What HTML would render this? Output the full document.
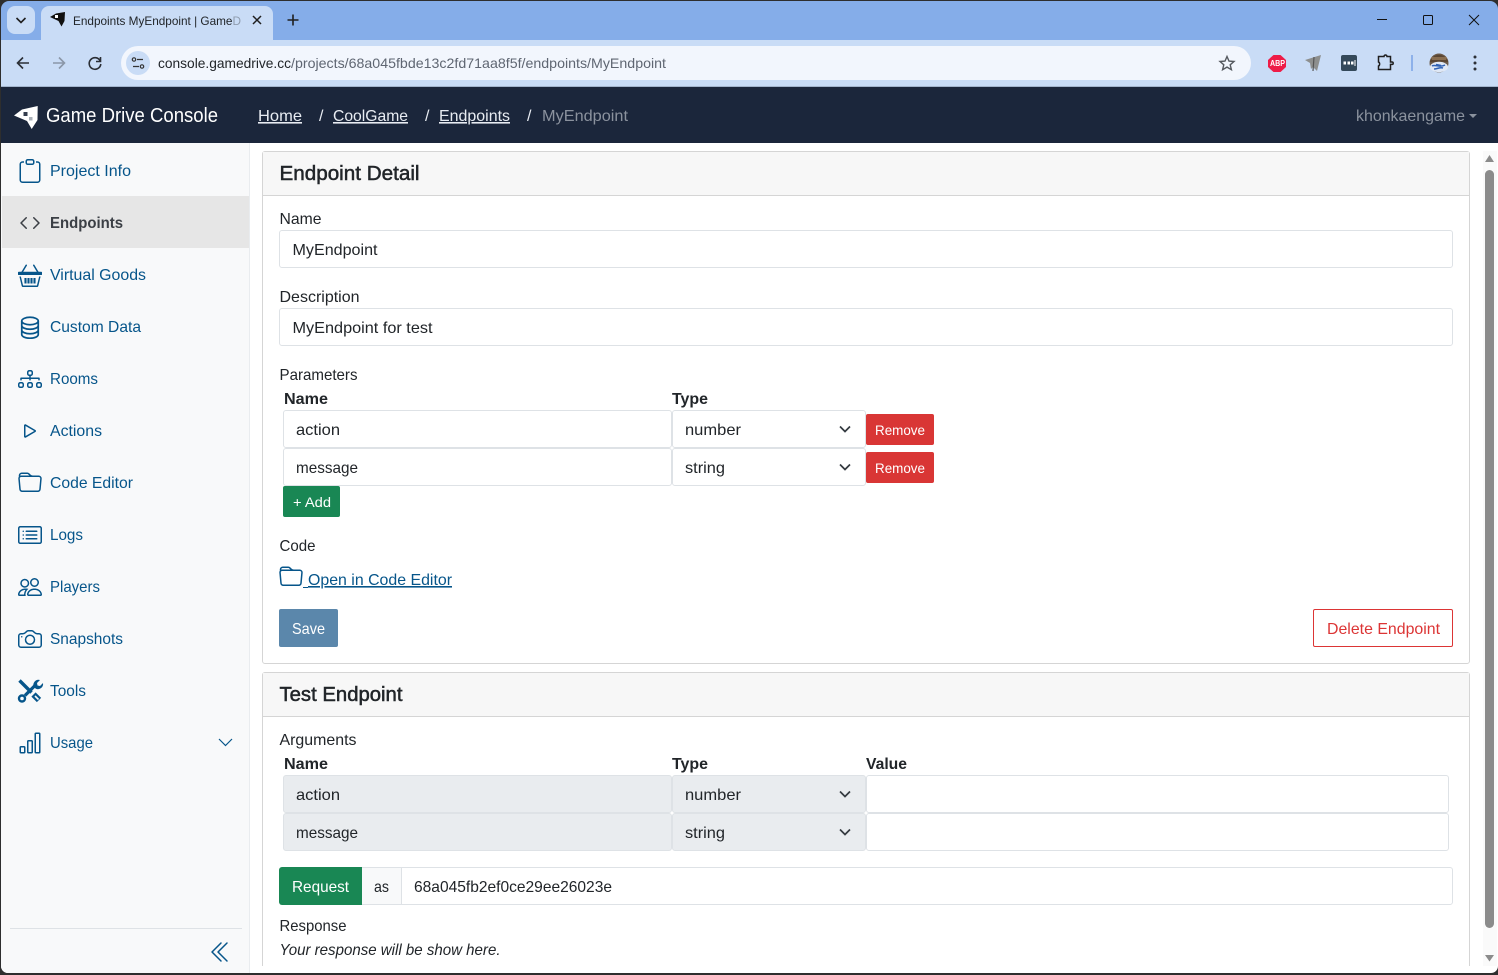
<!DOCTYPE html>
<html lang="en">
<head>
<meta charset="utf-8">
<title>Endpoints MyEndpoint | GameDrive</title>
<style>
html,body{margin:0;padding:0;width:1498px;height:975px;overflow:hidden;background:#2e2e2e}
.b{position:absolute;box-sizing:border-box}
svg.o{position:absolute;left:0;top:0}
text{font-family:"Liberation Sans",sans-serif;font-size:16px;fill:#212529;white-space:pre}
.s{fill:#06558a}
.m{stroke:#212529;stroke-width:.5px}
.n{font-weight:700;font-size:16px}
.w{fill:#fff;font-size:14px}
.i{fill:#06558a}
</style>
</head>
<body>
<!-- browser chrome -->
<div class="b" style="left:1px;top:1px;width:1497px;height:39px;background:#85ade9;border-radius:8px 8px 0 0"></div>
<div class="b" style="left:1px;top:40px;width:1497px;height:47px;background:#c9dcf6;border-bottom:1px solid #a3b5cd"></div>
<div class="b" style="left:7px;top:6px;width:28px;height:28px;background:#c9dcf6;border-radius:8px"></div>
<div class="b" style="left:41px;top:6px;width:232px;height:35px;background:#c9dcf6;border-radius:8px 8px 0 0"></div>
<div class="b" style="left:121px;top:46px;width:1130px;height:34px;background:#f2f6fd;border-radius:17px"></div>
<div class="b" style="left:126px;top:51px;width:24px;height:24px;background:#c9dcf6;border-radius:12px"></div>
<!-- app -->
<div class="b" style="left:1px;top:87px;width:1497px;height:56px;background:#1b263b"></div>
<div class="b" style="left:1px;top:143px;width:1497px;height:830px;background:#fff;border-radius:0 0 7px 7px"></div>
<div class="b" style="left:1px;top:143px;width:249px;height:830px;background:#f8f9fa;border-right:1px solid #e9ecef;border-radius:0 0 0 7px"></div>
<div class="b" style="left:2px;top:196px;width:247px;height:52px;background:#e6e6e6"></div>
<div class="b" style="left:10px;top:928px;width:232px;height:1px;background:#dee2e6"></div>
<!-- scrollbar -->
<div class="b" style="left:1483px;top:151px;width:14px;height:815px;background:#fafafa"></div>
<div class="b" style="left:1485px;top:170px;width:9px;height:758px;background:#8b8b8b;border-radius:5px"></div>
<!-- card 1 -->
<div class="b" style="left:262px;top:151px;width:1208px;height:513px;border:1px solid #d5d5d5;border-radius:3px;background:#fff"></div>
<div class="b" style="left:263px;top:152px;width:1206px;height:44px;background:#f7f7f7;border-bottom:1px solid #d5d5d5"></div>
<div class="b" style="left:279px;top:230px;width:1174px;height:38px;border:1px solid #dee2e6;border-radius:3px"></div>
<div class="b" style="left:279px;top:308px;width:1174px;height:38px;border:1px solid #dee2e6;border-radius:3px"></div>
<div class="b" style="left:283px;top:410px;width:389px;height:38px;border:1px solid #dee2e6;border-radius:3px"></div>
<div class="b" style="left:672px;top:410px;width:194px;height:38px;border:1px solid #dee2e6;border-radius:3px"></div>
<div class="b" style="left:283px;top:448px;width:389px;height:38px;border:1px solid #dee2e6;border-radius:3px"></div>
<div class="b" style="left:672px;top:448px;width:194px;height:38px;border:1px solid #dee2e6;border-radius:3px"></div>
<div class="b" style="left:866px;top:414px;width:68px;height:31px;background:#d93635;border-radius:2px"></div>
<div class="b" style="left:866px;top:452px;width:68px;height:31px;background:#d93635;border-radius:2px"></div>
<div class="b" style="left:283px;top:486px;width:57px;height:31px;background:#198754;border-radius:2px"></div>
<div class="b" style="left:279px;top:609px;width:59px;height:38px;background:#5b87ab;border-radius:2px"></div>
<div class="b" style="left:1313px;top:609px;width:140px;height:38px;border:1px solid #dc3535;border-radius:2px"></div>
<!-- card 2 -->
<div class="b" style="left:262px;top:672px;width:1208px;height:294px;border:1px solid #d5d5d5;border-bottom:0;border-radius:3px 3px 0 0;background:#fff"></div>
<div class="b" style="left:263px;top:673px;width:1206px;height:44px;background:#f7f7f7;border-bottom:1px solid #d5d5d5"></div>
<div class="b" style="left:283px;top:775px;width:389px;height:38px;border:1px solid #dee2e6;background:#e9ecef;border-radius:3px"></div>
<div class="b" style="left:672px;top:775px;width:194px;height:38px;border:1px solid #dee2e6;background:#e9ecef;border-radius:3px"></div>
<div class="b" style="left:866px;top:775px;width:583px;height:38px;border:1px solid #dee2e6;border-radius:3px"></div>
<div class="b" style="left:283px;top:813px;width:389px;height:38px;border:1px solid #dee2e6;background:#e9ecef;border-radius:3px"></div>
<div class="b" style="left:672px;top:813px;width:194px;height:38px;border:1px solid #dee2e6;background:#e9ecef;border-radius:3px"></div>
<div class="b" style="left:866px;top:813px;width:583px;height:38px;border:1px solid #dee2e6;border-radius:3px"></div>
<div class="b" style="left:279px;top:867px;width:83px;height:38px;background:#198754;border-radius:3px 0 0 3px"></div>
<div class="b" style="left:362px;top:867px;width:40px;height:38px;background:#f8f9fa;border:1px solid #dee2e6;border-left:0"></div>
<div class="b" style="left:401px;top:867px;width:1052px;height:38px;border:1px solid #dee2e6;border-radius:0 3px 3px 0"></div>

<svg class="o" width="1498" height="975" viewBox="0 0 1498 975" xmlns="http://www.w3.org/2000/svg">
<!-- chrome icons -->
<path d="M16.5 18l4.5 4.5 4.5-4.5" fill="none" stroke="#1f1f1f" stroke-width="1.6"/>
<path d="M50 17 56 13.500l9-1.500-.5 9-3 5.500-3-5.500z" fill="#111"/><rect x="55" y="15" width="3" height="3" fill="#fff"/>
<text x="73" y="25" style="font-size:12px" fill="#1f1f1f" textLength="168" lengthAdjust="spacingAndGlyphs">Endpoints MyEndpoint | GameD</text>
<rect x="232" y="10" width="10" height="20" fill="#c9dcf6" opacity=".65"/>
<path d="M253 16l8 8M261 16l-8 8" stroke="#1f1f1f" stroke-width="1.5"/>
<path d="M293 14.500v11M287.500 20h11" stroke="#1f1f1f" stroke-width="1.6"/>
<path d="M1377 19.500h10" stroke="#111" stroke-width="1"/>
<rect x="1423.500" y="15.500" width="9" height="9" rx="1" fill="none" stroke="#111"/>
<path d="M1469 15l10 10M1479 15l-10 10" stroke="#111" stroke-width="1"/>
<path d="M29 63H18M23 57.500 17.500 63l5.500 5.500" fill="none" stroke="#2b2f36" stroke-width="1.6"/>
<path d="M53 63h11M59 57.500l5.500 5.500-5.500 5.500" fill="none" stroke="#8b97a8" stroke-width="1.6"/>
<path d="M100 60.500A5.800 5.800 0 1 0 100.800 64M100.500 57v4.500H96" fill="none" stroke="#2b2f36" stroke-width="1.6"/>
<circle cx="134" cy="59.500" r="1.700" fill="none" stroke="#333" stroke-width="1.200"/><path d="M137 59.500h6M133 66.500h6" stroke="#333" stroke-width="1.200"/><circle cx="142" cy="66.500" r="1.700" fill="none" stroke="#333" stroke-width="1.200"/>
<text x="158" y="68" style="font-size:14px" fill="#1f1f1f" textLength="133" lengthAdjust="spacingAndGlyphs">console.gamedrive.cc</text>
<text x="291" y="68" style="font-size:14px;fill:#5f6672" textLength="375" lengthAdjust="spacingAndGlyphs">/projects/68a045fbde13c2fd71aa8f5f/endpoints/MyEndpoint</text>
<path d="M1227 56.500l2 4.600 5 .4-3.800 3.300 1.200 4.900-4.400-2.600-4.400 2.600 1.200-4.900-3.800-3.300 5-.4z" fill="none" stroke="#55595f" stroke-width="1.400"/>
<path d="M1273.500 55h7l5.500 5v7l-5.500 5h-7l-5.500-5v-7z" fill="#ee1c47"/>
<text x="1270" y="66" style="font-size:8px;font-weight:700;fill:#fff" textLength="15" lengthAdjust="spacingAndGlyphs">ABP</text>
<path d="M1305 60l16-5-4 16-4-4-2 2-1-6z" fill="#8d8f8e"/><path d="M1314 57l-1 14" stroke="#555" stroke-width="1.200"/>
<rect x="1341" y="55" width="16" height="16" rx="2" fill="#34495a"/><path d="M1343.500 61.500h2.500v3h-2.500zM1347.500 61.500h2.500v3h-2.500zM1351 61.500h2.500v3h-2.500z" fill="#fff"/><path d="M1355 60v6" stroke="#fff"/>
<path d="M1378.500 56.500h5.500a1.500 1.500 0 0 1 3 0h3.500v5.500h1.500a1.200 1.200 0 0 1 0 2.400h-1.500v5.100h-12v-3.500c1.500-.5 1.500-3.500 0-4z" fill="none" stroke="#1f1f1f" stroke-width="1.500"/>
<rect x="1411" y="55" width="2" height="16" fill="#8db1ea"/>
<circle cx="1439" cy="63" r="9.500" fill="#6b5a49"/><path d="M1429.800 62a9.500 9.500 0 0 1 18.400 0z" fill="#5a4633"/><path d="M1431 57h16l-1 3h-14z" fill="#b8956d" opacity=".5"/><ellipse cx="1439" cy="67" rx="9" ry="5.200" fill="#dfe8f6"/><path d="M1432 66c3-2 8 2 13-1M1434 69c3 0 6-2 9-1M1436 64.500l5 1" stroke="#2f62b5" stroke-width="1.500" fill="none"/>
<circle cx="1475" cy="57" r="1.500" fill="#2b2f36"/><circle cx="1475" cy="63" r="1.500" fill="#2b2f36"/><circle cx="1475" cy="69" r="1.500" fill="#2b2f36"/>

<!-- navbar -->
<path d="M14 115.500 22 109.500 37.700 106 37.500 120 31.700 129 27 121z" fill="#fff"/><rect x="23.500" y="112" width="4" height="4" fill="#333c4c"/><rect x="29" y="117" width="3.500" height="3.500" fill="#aab0b8"/>
<text x="46" y="122" style="font-size:20px;fill:#fff" textLength="172" lengthAdjust="spacingAndGlyphs">Game Drive Console</text>
<text x="258" y="121" style="fill:#e8ecf2" textLength="44" lengthAdjust="spacingAndGlyphs" text-decoration="underline">Home</text>
<text x="319" y="121" style="fill:#e8ecf2">/</text>
<text x="333" y="121" style="fill:#e8ecf2" textLength="75" lengthAdjust="spacingAndGlyphs" text-decoration="underline">CoolGame</text>
<text x="425" y="121" style="fill:#e8ecf2">/</text>
<text x="439" y="121" style="fill:#e8ecf2" textLength="71" lengthAdjust="spacingAndGlyphs" text-decoration="underline">Endpoints</text>
<text x="527" y="121" style="fill:#e8ecf2">/</text>
<text x="542" y="121" style="fill:#8b929e" textLength="86" lengthAdjust="spacingAndGlyphs">MyEndpoint</text>
<text x="1356" y="121" style="fill:#8b929e" textLength="109" lengthAdjust="spacingAndGlyphs">khonkaengame</text>
<path d="M1469 114h8l-4 4z" fill="#8b929e"/>

<!-- sidebar labels -->
<text class="s" x="50" y="176" textLength="81" lengthAdjust="spacingAndGlyphs">Project Info</text>
<text x="50" y="228" style="font-weight:700;fill:#3b3f45" textLength="73" lengthAdjust="spacingAndGlyphs">Endpoints</text>
<text class="s" x="50" y="280" textLength="96" lengthAdjust="spacingAndGlyphs">Virtual Goods</text>
<text class="s" x="50" y="332" textLength="91" lengthAdjust="spacingAndGlyphs">Custom Data</text>
<text class="s" x="50" y="384" textLength="48" lengthAdjust="spacingAndGlyphs">Rooms</text>
<text class="s" x="50" y="436" textLength="52" lengthAdjust="spacingAndGlyphs">Actions</text>
<text class="s" x="50" y="488" textLength="83" lengthAdjust="spacingAndGlyphs">Code Editor</text>
<text class="s" x="50" y="540" textLength="33" lengthAdjust="spacingAndGlyphs">Logs</text>
<text class="s" x="50" y="592" textLength="50" lengthAdjust="spacingAndGlyphs">Players</text>
<text class="s" x="50" y="644" textLength="73" lengthAdjust="spacingAndGlyphs">Snapshots</text>
<text class="s" x="50" y="696" textLength="36" lengthAdjust="spacingAndGlyphs">Tools</text>
<text class="s" x="50" y="748" textLength="43" lengthAdjust="spacingAndGlyphs">Usage</text>

<!-- sidebar icons -->
<svg x="18" y="159" width="24" height="24" viewBox="0 0 16 16" class="i"><path d="M4 1.500H3a2 2 0 0 0-2 2V14a2 2 0 0 0 2 2h10a2 2 0 0 0 2-2V3.500a2 2 0 0 0-2-2h-1v1h1a1 1 0 0 1 1 1V14a1 1 0 0 1-1 1H3a1 1 0 0 1-1-1V3.500a1 1 0 0 1 1-1h1v-1z"/><path d="M9.500 1a.5.5 0 0 1 .5.5v1a.5.5 0 0 1-.5.5h-3a.5.5 0 0 1-.5-.5v-1a.5.5 0 0 1 .5-.5h3zm-3-1A1.500 1.500 0 0 0 5 1.500v1A1.500 1.500 0 0 0 6.500 4h3A1.500 1.500 0 0 0 11 2.500v-1A1.500 1.500 0 0 0 9.500 0h-3z"/></svg>
<svg x="18" y="211" width="24" height="24" viewBox="0 0 16 16" fill="#3b3f45"><path d="M5.854 4.854a.5.5 0 1 0-.708-.708l-3.500 3.500a.5.5 0 0 0 0 .708l3.500 3.500a.5.5 0 0 0 .708-.708L2.707 8l3.147-3.146zm4.292 0a.5.5 0 0 1 .708-.708l3.500 3.500a.5.5 0 0 1 0 .708l-3.500 3.500a.5.5 0 0 1-.708-.708L13.293 8l-3.147-3.146z"/></svg>
<svg x="18" y="263" width="24" height="24" viewBox="0 0 16 16" class="i"><path d="M5.757 1.071a.5.5 0 0 1 .172.686L3.383 6h9.234L10.070 1.757a.5.5 0 1 1 .858-.514L13.783 6H15.500a.5.5 0 0 1 .5.5v1a.5.5 0 0 1-.5.5H.5a.5.5 0 0 1-.5-.5v-1A.5.5 0 0 1 .5 6h1.717L5.070 1.243a.5.5 0 0 1 .687-.172zM3.394 15l-1.480-6h-.970l1.525 6.426a.75.75 0 0 0 .729.574h9.606a.75.75 0 0 0 .730-.574L15.056 9h-.972l-1.479 6h-9.211z"/><rect x="0" y="5.800" width="16" height="2.200" rx=".5"/><path d="M4.300 10h1.400v3.700H4.300zM6.300 10h1.400v3.700H6.300zM8.300 10h1.400v3.700H8.300zM10.300 10h1.400v3.700h-1.400z"/></svg>
<svg x="18" y="315" width="24" height="24" viewBox="0 0 16 16" fill="none" stroke="#06558a" stroke-width="1.150"><ellipse cx="8" cy="4" rx="5.500" ry="2.500"/><path d="M2.500 4v9c0 1.400 2.500 2.500 5.500 2.500s5.500-1.100 5.500-2.500V4M2.500 7c0 1.400 2.500 2.500 5.500 2.500S13.500 8.400 13.500 7M2.500 10c0 1.400 2.500 2.500 5.500 2.500s5.500-1.100 5.500-2.500"/></svg>
<svg x="18" y="367" width="24" height="24" viewBox="0 0 16 16" class="i"><path d="M6 3.500A1.500 1.500 0 0 1 7.500 2h1A1.500 1.500 0 0 1 10 3.500v1A1.500 1.500 0 0 1 8.500 6v1H14a.5.5 0 0 1 .5.5v1a.5.5 0 0 1-1 0V8h-5v.5a.5.5 0 0 1-1 0V8h-5v.5a.5.5 0 0 1-1 0v-1A.5.5 0 0 1 2 7h5.500V6A1.500 1.500 0 0 1 6 4.500v-1zM8.500 5a.5.5 0 0 0 .5-.5v-1a.5.5 0 0 0-.5-.5h-1a.5.5 0 0 0-.5.5v1a.5.5 0 0 0 .5.5h1zM0 11.500A1.500 1.500 0 0 1 1.500 10h1A1.500 1.500 0 0 1 4 11.500v1A1.500 1.500 0 0 1 2.500 14h-1A1.500 1.500 0 0 1 0 12.500v-1zm1.500-.5a.5.5 0 0 0-.5.5v1a.5.5 0 0 0 .5.5h1a.5.5 0 0 0 .5-.5v-1a.5.5 0 0 0-.5-.5h-1zm4.500.5A1.500 1.500 0 0 1 7.500 10h1a1.500 1.500 0 0 1 1.500 1.500v1A1.500 1.500 0 0 1 8.500 14h-1A1.500 1.500 0 0 1 6 12.500v-1zm1.500-.5a.5.5 0 0 0-.5.5v1a.5.5 0 0 0 .5.5h1a.5.5 0 0 0 .5-.5v-1a.5.5 0 0 0-.5-.5h-1zm4.500.5a1.500 1.500 0 0 1 1.500-1.500h1a1.500 1.500 0 0 1 1.500 1.500v1a1.500 1.500 0 0 1-1.500 1.500h-1a1.500 1.500 0 0 1-1.500-1.500v-1zm1.500-.5a.5.5 0 0 0-.5.5v1a.5.5 0 0 0 .5.5h1a.5.5 0 0 0 .5-.5v-1a.5.5 0 0 0-.5-.5h-1z"/></svg>
<svg x="18" y="419" width="24" height="24" viewBox="0 0 16 16" class="i"><path d="M10.804 8 5 4.633v6.734L10.804 8zm.792-.696a.802.802 0 0 1 0 1.392l-6.363 3.692C4.713 12.690 4 12.345 4 11.692V4.308c0-.653.713-.998 1.233-.696l6.363 3.692z"/></svg>
<svg x="18" y="471" width="24" height="24" viewBox="0 0 16 16" class="i"><path d="M.54 3.870.5 3a2 2 0 0 1 2-2h3.672a2 2 0 0 1 1.414.586l.828.828A2 2 0 0 0 9.828 3h3.982a2 2 0 0 1 1.992 2.181l-.637 7A2 2 0 0 1 13.174 14H2.826a2 2 0 0 1-1.991-1.819l-.637-7a1.990 1.990 0 0 1 .342-1.310zM2.190 4a1 1 0 0 0-.996 1.090l.637 7a1 1 0 0 0 .995.910h10.348a1 1 0 0 0 .995-.910l.637-7A1 1 0 0 0 13.810 4H2.190zm4.690-1.707A1 1 0 0 0 6.172 2H2.500a1 1 0 0 0-1 .981l.006.139C1.720 3.042 1.950 3 2.190 3h5.396l-.707-.707z"/></svg>
<svg x="18" y="523" width="24" height="24" viewBox="0 0 16 16" class="i"><path d="M14.500 3a.5.5 0 0 1 .5.5v9a.5.5 0 0 1-.5.5h-13a.5.5 0 0 1-.5-.5v-9a.5.5 0 0 1 .5-.5h13zm-13-1A1.500 1.500 0 0 0 0 3.500v9A1.500 1.500 0 0 0 1.500 14h13a1.500 1.500 0 0 0 1.500-1.500v-9A1.500 1.500 0 0 0 14.500 2h-13z"/><path d="M5 8a.5.5 0 0 1 .5-.5h7a.5.5 0 0 1 0 1h-7A.5.5 0 0 1 5 8zm0-2.500a.5.5 0 0 1 .5-.5h7a.5.5 0 0 1 0 1h-7a.5.5 0 0 1-.5-.5zm0 5a.5.5 0 0 1 .5-.5h7a.5.5 0 0 1 0 1h-7a.5.5 0 0 1-.5-.5zm-1-5a.5.5 0 1 1-1 0 .5.5 0 0 1 1 0zM4 8a.5.5 0 1 1-1 0 .5.5 0 0 1 1 0zm0 2.500a.5.5 0 1 1-1 0 .5.5 0 0 1 1 0z"/></svg>
<svg x="18" y="575" width="24" height="24" viewBox="0 0 16 16" class="i"><path d="M15 14s1 0 1-1-1-4-5-4-5 3-5 4 1 1 1 1h8Zm-7.978-1A.261.261 0 0 1 7 12.996c.001-.264.167-1.030.76-1.720C8.312 10.629 9.282 10 11 10c1.717 0 2.687.630 3.240 1.276.593.690.758 1.457.760 1.720l-.008.002a.274.274 0 0 1-.014.002H7.022ZM11 7a2 2 0 1 0 0-4 2 2 0 0 0 0 4Zm3-2a3 3 0 1 1-6 0 3 3 0 0 1 6 0ZM6.936 9.280a5.880 5.880 0 0 0-1.230-.247A7.350 7.350 0 0 0 5 9c-4 0-5 3-5 4 0 .667.333 1 1 1h4.216A2.238 2.238 0 0 1 5 13c0-1.010.377-2.042 1.090-2.904.243-.294.526-.569.846-.816ZM4.920 10A5.493 5.493 0 0 0 4 13H1c0-.260.164-1.030.760-1.724.545-.636 1.492-1.256 3.160-1.275ZM1.500 5.500a3 3 0 1 1 6 0 3 3 0 0 1-6 0Zm3-2a2 2 0 1 0 0 4 2 2 0 0 0 0-4Z"/></svg>
<svg x="18" y="627" width="24" height="24" viewBox="0 0 16 16" class="i"><path d="M15 12a1 1 0 0 1-1 1H2a1 1 0 0 1-1-1V6a1 1 0 0 1 1-1h1.172a3 3 0 0 0 2.120-.879l.830-.828A1 1 0 0 1 6.827 3h2.344a1 1 0 0 1 .707.293l.828.828A3 3 0 0 0 12.828 5H14a1 1 0 0 1 1 1v6zM2 4a2 2 0 0 0-2 2v6a2 2 0 0 0 2 2h12a2 2 0 0 0 2-2V6a2 2 0 0 0-2-2h-1.172a2 2 0 0 1-1.414-.586l-.828-.828A2 2 0 0 0 9.172 2H6.828a2 2 0 0 0-1.414.586l-.828.828A2 2 0 0 1 3.172 4H2z"/><path d="M8 11a2.500 2.500 0 1 1 0-5 2.500 2.500 0 0 1 0 5zm0 1a3.500 3.500 0 1 0 0-7 3.500 3.500 0 0 0 0 7zM3 6.500a.5.5 0 1 1-1 0 .5.5 0 0 1 1 0z"/></svg>
<!-- tools icon -->
<g fill="none" stroke="#06558a">
<path d="M19.500 680.500l12 12" stroke-width="3.400"/>
<path d="M33.500 694.500l5.500 5.500" stroke-width="6"/>
<path d="M25 695.500l10.500-10.500" stroke-width="3.200"/>
<circle cx="22" cy="698.500" r="3" stroke-width="2.400"/>
</g>
<path d="M34 687.500a5.200 5.200 0 0 1 6-7.500l-3 3 .5 2.500 2.500.5 3-3a5.200 5.200 0 0 1-6.500 6z" fill="#06558a"/>
<path d="M35 696l3.500 3.500" stroke="#f8f9fa" stroke-width="1.600"/>
<svg x="18" y="731" width="24" height="24" viewBox="0 0 16 16" class="i"><path d="M4 11H2v3h2v-3zm5-4H7v7h2V7zm5-5v12h-2V2h2zm-2-1a1 1 0 0 0-1 1v12a1 1 0 0 0 1 1h2a1 1 0 0 0 1-1V2a1 1 0 0 0-1-1h-2zM6 7a1 1 0 0 1 1-1h2a1 1 0 0 1 1 1v7a1 1 0 0 1-1 1H7a1 1 0 0 1-1-1V7zm-5 4a1 1 0 0 1 1-1h2a1 1 0 0 1 1 1v3a1 1 0 0 1-1 1H2a1 1 0 0 1-1-1v-3z"/></svg>
<path d="M219 739l6.500 6.500 6.500-6.500" fill="none" stroke="#06558a" stroke-width="1.200"/>
<svg x="209" y="940" width="24" height="24" viewBox="0 0 16 16" class="i"><path d="M8.354 1.646a.5.5 0 0 1 0 .708L2.707 8l5.647 5.646a.5.5 0 0 1-.708.708l-6-6a.5.5 0 0 1 0-.708l6-6a.5.5 0 0 1 .708 0z"/><path d="M12.354 1.646a.5.5 0 0 1 0 .708L6.707 8l5.647 5.646a.5.5 0 0 1-.708.708l-6-6a.5.5 0 0 1 0-.708l6-6a.5.5 0 0 1 .708 0z"/></svg>

<!-- scrollbar arrows -->
<path d="M1489.500 155l4.500 7h-9z" fill="#8b8b8b"/>
<path d="M1485 955h9l-4.500 6.500z" fill="#8b8b8b"/>

<!-- card 1 text -->
<text class="m" x="279.500" y="180" style="font-size:20px" textLength="140" lengthAdjust="spacingAndGlyphs">Endpoint Detail</text>
<text x="279.500" y="224" textLength="42" lengthAdjust="spacingAndGlyphs">Name</text>
<text x="292.500" y="255" textLength="85" lengthAdjust="spacingAndGlyphs">MyEndpoint</text>
<text x="279.500" y="302" textLength="80" lengthAdjust="spacingAndGlyphs">Description</text>
<text x="292.500" y="333" textLength="140" lengthAdjust="spacingAndGlyphs">MyEndpoint for test</text>
<text x="279.500" y="380" textLength="78" lengthAdjust="spacingAndGlyphs">Parameters</text>
<text class="n" x="284" y="404" textLength="44" lengthAdjust="spacingAndGlyphs">Name</text>
<text class="n" x="672" y="404" textLength="36" lengthAdjust="spacingAndGlyphs">Type</text>
<text x="296" y="435" textLength="44" lengthAdjust="spacingAndGlyphs">action</text>
<text x="685" y="435" textLength="56" lengthAdjust="spacingAndGlyphs">number</text>
<text x="296" y="473" textLength="62" lengthAdjust="spacingAndGlyphs">message</text>
<text x="685" y="473" textLength="40" lengthAdjust="spacingAndGlyphs">string</text>
<path d="M840 426.500l5 5 5-5M840 464.500l5 5 5-5M840 791.500l5 5 5-5M840 829.500l5 5 5-5" fill="none" stroke="#343a40" stroke-width="1.700"/>
<text class="w" x="875" y="435" textLength="50" lengthAdjust="spacingAndGlyphs">Remove</text>
<text class="w" x="875" y="473" textLength="50" lengthAdjust="spacingAndGlyphs">Remove</text>
<text class="w" x="293" y="507" textLength="38" lengthAdjust="spacingAndGlyphs">+ Add</text>
<text x="279.500" y="551" textLength="36" lengthAdjust="spacingAndGlyphs">Code</text>
<svg x="279" y="565" width="24" height="24" viewBox="0 0 16 16" class="i"><path d="M.54 3.870.5 3a2 2 0 0 1 2-2h3.672a2 2 0 0 1 1.414.586l.828.828A2 2 0 0 0 9.828 3h3.982a2 2 0 0 1 1.992 2.181l-.637 7A2 2 0 0 1 13.174 14H2.826a2 2 0 0 1-1.991-1.819l-.637-7a1.990 1.990 0 0 1 .342-1.310zM2.190 4a1 1 0 0 0-.996 1.090l.637 7a1 1 0 0 0 .995.910h10.348a1 1 0 0 0 .995-.910l.637-7A1 1 0 0 0 13.810 4H2.190zm4.690-1.707A1 1 0 0 0 6.172 2H2.500a1 1 0 0 0-1 .981l.006.139C1.720 3.042 1.950 3 2.190 3h5.396l-.707-.707z"/></svg>
<rect x="303" y="587" width="5" height="1" fill="#06558a"/>
<text class="s" x="308" y="585" textLength="144" lengthAdjust="spacingAndGlyphs" text-decoration="underline">Open in Code Editor</text>
<text x="292" y="634" style="fill:#fff" textLength="33" lengthAdjust="spacingAndGlyphs">Save</text>
<text x="1327" y="634" style="fill:#dc3535" textLength="113" lengthAdjust="spacingAndGlyphs">Delete Endpoint</text>

<!-- card 2 text -->
<text class="m" x="279.500" y="701" style="font-size:20px" textLength="123" lengthAdjust="spacingAndGlyphs">Test Endpoint</text>
<text x="279.500" y="745" textLength="77" lengthAdjust="spacingAndGlyphs">Arguments</text>
<text class="n" x="284" y="769" textLength="44" lengthAdjust="spacingAndGlyphs">Name</text>
<text class="n" x="672" y="769" textLength="36" lengthAdjust="spacingAndGlyphs">Type</text>
<text class="n" x="866" y="769" textLength="41" lengthAdjust="spacingAndGlyphs">Value</text>
<text x="296" y="800" textLength="44" lengthAdjust="spacingAndGlyphs">action</text>
<text x="685" y="800" textLength="56" lengthAdjust="spacingAndGlyphs">number</text>
<text x="296" y="838" textLength="62" lengthAdjust="spacingAndGlyphs">message</text>
<text x="685" y="838" textLength="40" lengthAdjust="spacingAndGlyphs">string</text>
<text x="292" y="892" style="fill:#fff" textLength="57" lengthAdjust="spacingAndGlyphs">Request</text>
<text x="374" y="892" textLength="15" lengthAdjust="spacingAndGlyphs">as</text>
<text x="414" y="892" textLength="198" lengthAdjust="spacingAndGlyphs">68a045fb2ef0ce29ee26023e</text>
<text x="279.500" y="931" textLength="67" lengthAdjust="spacingAndGlyphs">Response</text>
<text x="279.500" y="955" style="font-style:italic" textLength="221" lengthAdjust="spacingAndGlyphs">Your response will be show here.</text>
</svg>
</body>
</html>
